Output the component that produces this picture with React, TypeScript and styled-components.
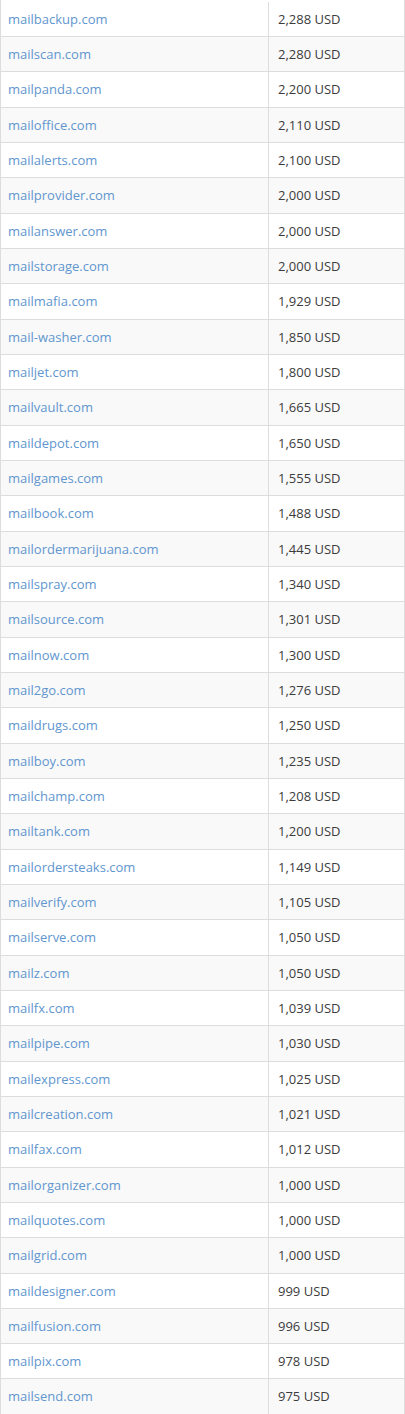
import React from "react";
import styled, { createGlobalStyle } from "styled-components";

const Global = createGlobalStyle`
  html, body { margin: 0; padding: 0; background: #fff; }
  body { font-family: "Open Sans", "Liberation Sans", sans-serif; }
`;

const rows: [string, string][] = [
  ["mailbackup.com", "2,288 USD"],
  ["mailscan.com", "2,280 USD"],
  ["mailpanda.com", "2,200 USD"],
  ["mailoffice.com", "2,110 USD"],
  ["mailalerts.com", "2,100 USD"],
  ["mailprovider.com", "2,000 USD"],
  ["mailanswer.com", "2,000 USD"],
  ["mailstorage.com", "2,000 USD"],
  ["mailmafia.com", "1,929 USD"],
  ["mail-washer.com", "1,850 USD"],
  ["mailjet.com", "1,800 USD"],
  ["mailvault.com", "1,665 USD"],
  ["maildepot.com", "1,650 USD"],
  ["mailgames.com", "1,555 USD"],
  ["mailbook.com", "1,488 USD"],
  ["mailordermarijuana.com", "1,445 USD"],
  ["mailspray.com", "1,340 USD"],
  ["mailsource.com", "1,301 USD"],
  ["mailnow.com", "1,300 USD"],
  ["mail2go.com", "1,276 USD"],
  ["maildrugs.com", "1,250 USD"],
  ["mailboy.com", "1,235 USD"],
  ["mailchamp.com", "1,208 USD"],
  ["mailtank.com", "1,200 USD"],
  ["mailordersteaks.com", "1,149 USD"],
  ["mailverify.com", "1,105 USD"],
  ["mailserve.com", "1,050 USD"],
  ["mailz.com", "1,050 USD"],
  ["mailfx.com", "1,039 USD"],
  ["mailpipe.com", "1,030 USD"],
  ["mailexpress.com", "1,025 USD"],
  ["mailcreation.com", "1,021 USD"],
  ["mailfax.com", "1,012 USD"],
  ["mailorganizer.com", "1,000 USD"],
  ["mailquotes.com", "1,000 USD"],
  ["mailgrid.com", "1,000 USD"],
  ["maildesigner.com", "999 USD"],
  ["mailfusion.com", "996 USD"],
  ["mailpix.com", "978 USD"],
  ["mailsend.com", "975 USD"],
];

const Table = styled.div`
  width: 405px;
  box-sizing: border-box;
  padding-top: 0.7px;
  border-left: 1px solid #dddddd;
  border-right: 1px solid #dddddd;
  font-size: 13px;
`;

const Row = styled.div<{ $striped: boolean }>`
  display: grid;
  grid-template-columns: 268px 1fr;
  border-top: 1px solid #dddddd;
  background: ${(p) => (p.$striped ? "#f9f9f9" : "#ffffff")};
  &:first-child { border-top-color: transparent; }
`;

const NameCell = styled.div`
  padding: 8px 7px;
  line-height: 18.33px;
  border-right: 1px solid #dddddd;
`;

const PriceCell = styled.div`
  padding: 8px 9px;
  line-height: 18.33px;
  color: #3c3c3c;
`;

const Link = styled.a`
  color: #6196cf;
  text-decoration: none;
`;

export default function App() {
  return (
    <>
      <Global />
      <Table>
        {rows.map(([name, price], i) => (
          <Row key={name} $striped={i % 2 === 1}>
            <NameCell>
              <Link href="#">{name}</Link>
            </NameCell>
            <PriceCell>{price}</PriceCell>
          </Row>
        ))}
      </Table>
    </>
  );
}
